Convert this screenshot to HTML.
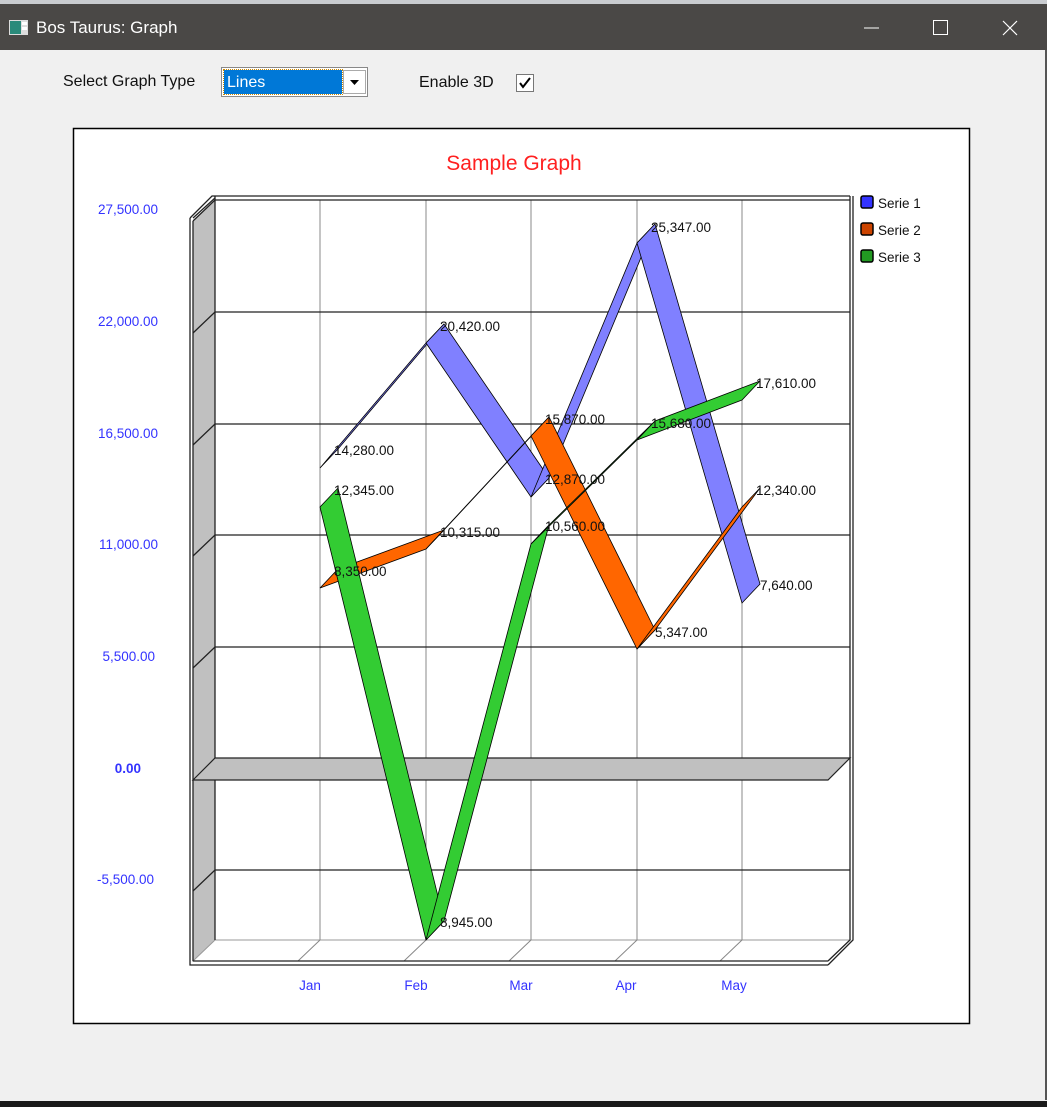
<!DOCTYPE html>
<html><head><meta charset="utf-8"><style>
body{margin:0;width:1047px;height:1107px;overflow:hidden;background:#f0f0f0;font-family:"Liberation Sans",sans-serif;position:relative}
.tb{position:absolute;left:0;top:4px;width:1047px;height:46px;background:#4a4846;color:#fff}
.top{position:absolute;left:0;top:0;width:1047px;height:4px;background:#c9ccd0}
</style></head><body>
<div class="top"></div>
<div class="tb">
<svg style="position:absolute;left:9px;top:16px" width="19" height="15"><rect x="0" y="0" width="19" height="15" fill="#ddd"/><rect x="1" y="1" width="11" height="13" fill="#2a8a7a"/><rect x="13" y="2" width="5" height="3" fill="#fff"/><rect x="13" y="7" width="5" height="3" fill="#fff"/></svg>
<div style="position:absolute;left:36px;top:14px;font-size:17px">Bos Taurus: Graph</div>
<svg style="position:absolute;left:860px;top:12px" width="180" height="26"><line x1="4" y1="12" x2="19" y2="12" stroke="#fff"/><rect x="73.5" y="4.5" width="14" height="14" fill="none" stroke="#fff"/><path d="M143 5L157 19M157 5L143 19" stroke="#fff" stroke-width="1.2"/></svg>
</div>
<div style="position:absolute;left:1045px;top:50px;width:2px;height:1050px;background:#555"></div>
<div style="position:absolute;left:63px;top:73px;font-size:16px;color:#111">Select Graph Type</div>
<div style="position:absolute;left:221px;top:67px;width:147px;height:30px;background:#fff;border:1px solid #888;box-sizing:border-box"></div>
<div style="position:absolute;left:224px;top:70px;width:118px;height:24px;background:#0078d7;color:#fff;font-size:16px;line-height:26px;padding-left:3px;box-sizing:border-box;outline:1px dotted #c80">Lines</div>
<div style="position:absolute;left:343px;top:70px;width:23px;height:24px;background:#fff;border:1px solid #aaa;box-sizing:border-box"><svg width="21" height="22"><path d="M6 9h9l-4.5 5z" fill="#000"/></svg></div>
<div style="position:absolute;left:419px;top:74px;font-size:16px;color:#111">Enable 3D</div>
<div style="position:absolute;left:516px;top:74px;width:18px;height:18px;background:#fff;border:1px solid #777;box-sizing:border-box"><svg width="16" height="16"><path d="M3 8l3 4 7-9" fill="none" stroke="#000" stroke-width="2"/></svg></div>
<div style="position:absolute;left:0;top:1101px;width:1047px;height:6px;background:#1a1a1a"></div>
<svg style="position:absolute;left:0;top:0" width="1047" height="1107" font-family="Liberation Sans, sans-serif">
<rect x="73.5" y="128.5" width="896" height="895" fill="#fff" stroke="#000" stroke-width="1.5"/>
<text x="514" y="170" text-anchor="middle" font-size="21" fill="#ff2020">Sample Graph</text>
<!-- left wall -->
<polygon points="193,221 215,200 215,940 193,961" fill="#c0c0c0"/>
<!-- floor -->
<polygon points="193,961 215,940 850,940 828,961" fill="#fff" stroke="#999"/>
<g stroke="#888" fill="none">
<path d="M320,200V940L298,961M426,200V940L404,961M531,200V940L509,961M637,200V940L615,961M742,200V940L720,961"/>
</g>
<g stroke="#222" stroke-width="1.3" fill="none">
<path d="M193,221L215,200H850M193,333L215,312H850M193,445L215,424H850M193,556L215,535H850M193,668L215,647H850M193,891L215,870H850"/>
<path d="M215,196V940M193,221V961M190,218V965H828M850,196V940L828,961M193,961H828"/>
<path d="M190,218L212,196H850M193,218L215,198"/>
<path d="M828,965L853,940V196"/>
</g>
<polygon points="193,780 215,758 850,758 828,780" fill="#c0c0c0" stroke="#222" stroke-width="1.2"/>
<g stroke="#000" stroke-width="0.8">
<g fill="#8080ff">
<polygon points="320,468 426,343 444,324 338,449"/>
<polygon points="426,343 531,497 549,478 444,324"/>
<polygon points="531,497 637,243 655,224 549,478"/>
<polygon points="637,243 742,603 760,584 655,224"/>
</g>
<g fill="#ff6600">
<polygon points="320,588 426,549 444,530 338,569"/>
<polygon points="426,549 531,436 549,417 444,530"/>
<polygon points="531,436 637,649 655,630 549,417"/>
<polygon points="637,649 742,507 760,488 655,630"/>
</g>
<g fill="#33cc33">
<polygon points="320,507 426,940 444,921 338,488"/>
<polygon points="426,940 531,544 549,525 444,921"/>
<polygon points="531,544 637,440 655,421 549,525"/>
<polygon points="637,440 742,400 760,381 655,421"/>
</g>
</g>
<g font-size="13.5" fill="#111">
<text x="334" y="455">14,280.00</text><text x="440" y="331">20,420.00</text><text x="545" y="484">12,870.00</text><text x="651" y="232">25,347.00</text><text x="760" y="590">7,640.00</text>
<text x="334" y="576">8,350.00</text><text x="440" y="537">10,315.00</text><text x="545" y="424">15,870.00</text><text x="655" y="637">5,347.00</text><text x="756" y="495">12,340.00</text>
<text x="334" y="495">12,345.00</text><text x="440" y="927">8,945.00</text><text x="545" y="531">10,560.00</text><text x="651" y="428">15,680.00</text><text x="756" y="388">17,610.00</text>
</g>
<g font-size="13.5" fill="#3333ff" text-anchor="end">
<text x="158" y="214">27,500.00</text><text x="158" y="326">22,000.00</text><text x="158" y="438">16,500.00</text><text x="158" y="549">11,000.00</text><text x="155" y="661">5,500.00</text><text x="141" y="773" font-weight="bold">0.00</text><text x="154" y="884">-5,500.00</text>
</g>
<g font-size="13.5" fill="#3333ff" text-anchor="middle">
<text x="310" y="990">Jan</text><text x="416" y="990">Feb</text><text x="521" y="990">Mar</text><text x="626" y="990">Apr</text><text x="734" y="990">May</text>
</g>
<g stroke="#000" stroke-width="1.5">
<rect x="861" y="196" width="12" height="12" rx="2" fill="#3333ff"/>
<rect x="861" y="223" width="12" height="12" rx="2" fill="#cc4400"/>
<rect x="861" y="250" width="12" height="12" rx="2" fill="#229922"/>
</g>
<g font-size="13.5" fill="#111"><text x="878" y="208">Serie 1</text><text x="878" y="235">Serie 2</text><text x="878" y="262">Serie 3</text></g>
</svg>
</body></html>
